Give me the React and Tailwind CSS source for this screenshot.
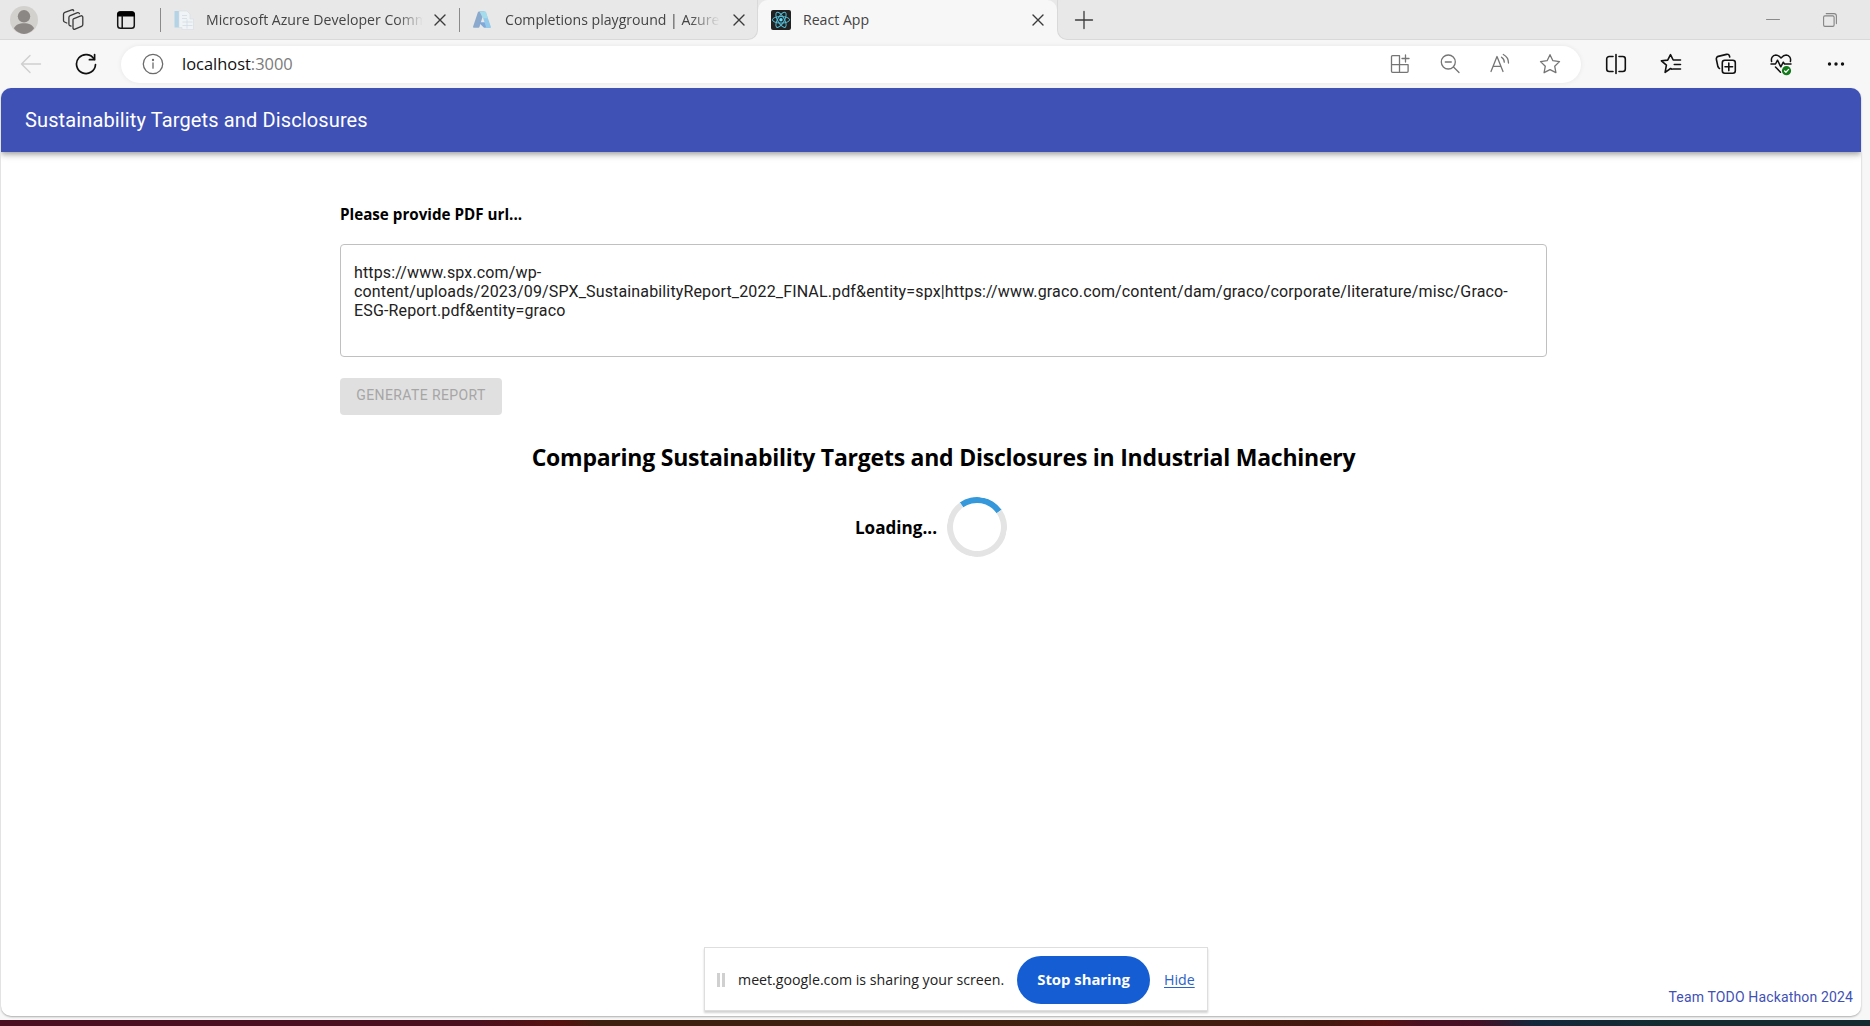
function Icon({ className, size = 24, sw = 1.3, children }) {
  return (
    <svg
      className={`shrink-0 ${className || ""}`}
      width={size}
      height={size}
      viewBox={`0 0 ${size} ${size}`}
      fill="none"
      stroke="currentColor"
      strokeWidth={sw}
      strokeLinecap="round"
      strokeLinejoin="round"
    >
      {children}
    </svg>
  );
}

function CloseIcon({ className }) {
  return (
    <Icon size={12} className={`text-[#3b3b3b] ${className || ""}`} sw={1.4}>
      <path d="M1 1l10 10M11 1L1 11" />
    </Icon>
  );
}

function Avatar() {
  return (
    <svg width="28" height="28" viewBox="0 0 28 28" className="shrink-0">
      <circle cx="14" cy="14" r="14" fill="#d3d1cd" />
      <circle cx="14" cy="10.3" r="6.2" fill="#8b8784" />
      <path d="M4 22.5c1.2-3.4 5-5.2 10-5.2s8.8 1.8 10 5.2A14 14 0 0 1 14 28 14 14 0 0 1 4 22.5z" fill="#8b8784" />
    </svg>
  );
}

function WorkspacesIcon() {
  return (
    <Icon className="text-[#3a3a3a]" sw={1.3}>
      <path d="M12.4 10.8l7.4-2.900a1.400 1.400 0 0 1 2 1.300v7.300a2 2 0 0 1-1.300 1.900l-6.500 2.800a1.400 1.400 0 0 1-2-1.300v-7.300a2 2 0 0 1 .4-1.800z" />
      <path d="M10 18.200l-1.200-.5a1.800 1.800 0 0 1-.9-1.700V9.500a2 2 0 0 1 1.300-1.900l7.300-2.900a1.500 1.500 0 0 1 1.900 1" />
      <path d="M5.800 15l-2.300-1a1.700 1.700 0 0 1-1-1.600V6.300a2 2 0 0 1 1.300-1.900l7-2.500a1.500 1.500 0 0 1 1.900.9" />
    </Icon>
  );
}

function TabActionsIcon() {
  return (
    <Icon size={20} className="text-[#151515]" sw={1.5}>
      <rect x="1.700" y="2" width="16.600" height="16.200" rx="2.800" />
      <path d="M1.200 6.500V4.200a3 3 0 0 1 3-3h11.600a3 3 0 0 1 3 3v2.300z" fill="#000" stroke="none" />
      <path d="M6.200 6v12" />
    </Icon>
  );
}

function DocFavicon() {
  return (
    <svg width="20" height="20" viewBox="0 0 20 20" className="shrink-0">
      <rect x="0.500" y="1" width="4.500" height="16.500" fill="#b4d3e6" />
      <path d="M5 1h8l3 3v5h3.500v10.500H8v-2H5z" fill="#f1f4f6" stroke="#d5dce0" strokeWidth="0.600" />
      <path d="M8 5.500h5M8 8.500h5M8.500 12h10M8.500 15.500h10M13 9.500v9" stroke="#d5dfe6" strokeWidth="0.900" />
    </svg>
  );
}

function AzureIcon() {
  return (
    <svg width="18" height="18" viewBox="0 0 18 18" className="shrink-0">
      <path d="M6 .5h5.200L6.500 15.800a1.200 1.200 0 0 1-1.100.9H1.200a1 1 0 0 1-1-1.400L4.900 1.300A1.200 1.200 0 0 1 6 .500z" fill="#8ba9cd" />
      <path d="M5.500 11.200h7.800l1 5.500H11z" fill="#7fa8d8" />
      <path d="M6.500.500h5.300a1.200 1.200 0 0 1 1.100.8l4.900 14.300a1 1 0 0 1-1 1.400h-4.600a1.200 1.200 0 0 0 .7-1.400L8.500 2z" fill="#93c9ea" />
      <path d="M6.500.500h5.300a1.200 1.200 0 0 1 1.100.8l2 6H10z" fill="#a5dcec" />
    </svg>
  );
}

function ReactFavicon() {
  return (
    <svg width="20" height="20" viewBox="0 0 20 20" className="shrink-0">
      <rect width="20" height="20" rx="2" fill="#222" />
      <g fill="none" stroke="#53bcd6" strokeWidth="1">
        <ellipse cx="10" cy="9.800" rx="8.600" ry="3.300" />
        <ellipse cx="10" cy="9.800" rx="8.600" ry="3.300" transform="rotate(60 10 9.800)" />
        <ellipse cx="10" cy="9.800" rx="8.600" ry="3.300" transform="rotate(120 10 9.800)" />
      </g>
      <circle cx="10" cy="9.800" r="1.700" fill="#61dafb" />
    </svg>
  );
}

function TabBar() {
  return (
    <div className="flex h-10 shrink-0 bg-[#f7f7f7] text-[14.100px] leading-5 text-[#444]">
      <div className="flex w-[758px] items-center rounded-br-[10px] border-r border-b border-[#d9d9d9] bg-[#e8e8e8]">
        <div className="ml-[10px] flex items-center">
          <Avatar />
          <span className="ml-[23px] flex"><WorkspacesIcon /></span>
          <span className="ml-[31px] flex"><TabActionsIcon /></span>
        </div>
        <div className="ml-6 h-6 w-px bg-[#8a8a8a]" />
        <div className="ml-[13px] flex w-[274px] items-center">
          <DocFavicon />
          <span className="ml-3 w-[217px] overflow-hidden whitespace-nowrap [mask-image:linear-gradient(to_right,#000_88%,transparent)]">
            Microsoft Azure Developer Comm
          </span>
          <CloseIcon className="ml-[11px]" />
        </div>
        <div className="ml-[11px] h-6 w-px bg-[#8a8a8a]" />
        <div className="ml-[13px] flex items-center">
          <AzureIcon />
          <span className="ml-[14px] w-[215px] overflow-hidden whitespace-nowrap [mask-image:linear-gradient(to_right,#000_86%,transparent)]">
            Completions playground | Azure
          </span>
          <CloseIcon className="ml-[13px]" />
        </div>
      </div>
      <div className="w-[299px] bg-[#e8e8e8]">
        <div className="flex h-full items-center rounded-t-[10px] bg-[#f7f7f7] pl-[13px]">
          <ReactFavicon />
          <span className="ml-3 w-[229px]">React App</span>
          <CloseIcon />
        </div>
      </div>
      <div className="flex flex-1 items-center rounded-bl-[10px] border-b border-l border-[#d9d9d9] bg-[#e8e8e8] text-[#3b3b3b]">
        <Icon size={20} className="ml-4 text-[#3b3b3b]" sw={1.3}>
          <path d="M10 1.500v17M1.500 10h17" />
        </Icon>
        <Icon size={14} className="ml-auto text-[#8a8a8a]" sw={1}>
          <path d="M.5 6.500h13" />
        </Icon>
        <Icon size={14} className="mr-[33px] ml-[43px] text-[#858585]" sw={1.100}>
          <rect x="0.600" y="2.900" width="10.500" height="10.500" rx="1.300" />
          <path d="M3.200.6h7.800a2.400 2.400 0 0 1 2.400 2.400v7.600" />
        </Icon>
      </div>
    </div>
  );
}

function Toolbar() {
  return (
    <div className="flex h-12 shrink-0 items-center bg-[#f7f7f7]">
      <Icon size={22} className="ml-5 text-[#cfcfcf]" sw={1.4}>
        <path d="M20.500 11H1.500M10 2.500L1.500 11l8.500 8.500" />
      </Icon>
      <Icon size={22} className="ml-[33px] text-[#111]" sw={1.7}>
        <path d="M19.300 6.400A9.500 9.500 0 1 0 20.500 11.500" />
        <path d="M19.600 1.500v5.200h-5.200" />
      </Icon>
      <div className="ml-6 flex h-[37px] w-[1460px] items-center rounded-full bg-white pl-[21px] shadow-[0_0_5px_rgba(0,0,0,0.07)]">
        <Icon size={22} className="text-[#6b6b6b]" sw={1.3}>
          <circle cx="11" cy="11" r="9.700" />
          <path d="M11 10v5.200" />
          <circle cx="11" cy="7" r="0.500" fill="currentColor" />
        </Icon>
        <span className="ml-[18px] text-[16.450px] leading-6 text-[#111]">
          localhost<span className="text-[#7b7b7b]">:3000</span>
        </span>
        <div className="mr-[20px] ml-auto flex items-center gap-7 text-[#757575]">
          <Icon size={22} sw={1.3}>
            <path d="M10.500 2.700H3.500a1 1 0 0 0-1 1v14.600a1 1 0 0 0 1 1h14.600a1 1 0 0 0 1-1v-6.600H2.500M10.500 2.700v16.600M16.500 2v7M13 5.500h7" />
          </Icon>
          <Icon size={22} sw={1.3}>
            <circle cx="9.300" cy="9" r="7" />
            <path d="M6.300 9h6M14.500 14l5.500 5.500" />
          </Icon>
          <Icon size={22} sw={1.3}>
            <path d="M2 18.500L8 3.500l6 15M4.200 13.300h7.600M12.500 4.200a6 6 0 0 1 2.800 5M14.300 1.500a9.500 9.500 0 0 1 5.200 8.500" />
          </Icon>
          <Icon size={22} sw={1.3}>
            <path d="M11 1.700l2.900 6 6.600.9-4.800 4.600 1.200 6.500L11 16.600l-5.900 3.100 1.200-6.500L1.500 8.600l6.600-.9z" />
          </Icon>
        </div>
      </div>
      <div className="ml-[23px] flex items-center gap-[31px] text-[#111]">
        <Icon sw={1.6}>
          <path d="M9 4.500H5.200a2.500 2.500 0 0 0-2.500 2.500v10a2.500 2.500 0 0 0 2.500 2.500H9M15 4.500h3.800a2.500 2.500 0 0 1 2.500 2.500v10a2.500 2.500 0 0 1-2.500 2.500H15M12 2.500v19" />
        </Icon>
        <Icon sw={1.600}>
          <path d="M13 17.200l-1.400-.7-5.500 3.900 1.300-7.300-5-4.300 6.300-.7L11.500 2.600l2.700 5.400h7.300M15.300 12.500h6.200M14 17h7.500" />
        </Icon>
        <Icon sw={1.600}>
          <rect x="8.300" y="8.300" width="13" height="13" rx="2.500" />
          <path d="M14.800 11v7.600M11 14.800h7.600M5.500 16.500l-.6-.5a3 3 0 0 1-1-1.400L2.400 7.500A2.500 2.500 0 0 1 4.200 4.400l8.300-2a2.500 2.500 0 0 1 3 1.700l.2.900" />
        </Icon>
        <Icon sw={1.500}>
          <path d="M2.600 9.500C1.800 6 3.500 3.300 6.800 3.100c2.200 0 3.700 1.200 5.200 2.800 1.500-1.600 3-2.800 5.200-2.800 3.300.2 5 2.900 4.200 6.400M2 12h4.500l2-3.800 3.300 6.600 2.500-4.600 1.200 1.800H22M6.500 15l5 5.200" />
          <circle cx="17.500" cy="18.700" r="4.600" fill="#137a1b" stroke="none" />
          <path d="M15.600 19l1.300 1.200 2.700-2.800" stroke="#fff" strokeWidth="1.300" />
        </Icon>
        <Icon sw={1.600}>
          <g fill="currentColor" stroke="none">
            <circle cx="5.500" cy="12" r="1.700" />
            <circle cx="12" cy="12" r="1.700" />
            <circle cx="18.500" cy="12" r="1.700" />
          </g>
        </Icon>
      </div>
    </div>
  );
}

function SharingBar() {
  return (
    <div className="absolute top-[947px] left-[704px] flex h-[64px] w-[504px] items-center border border-[#dedede] bg-white pt-px shadow-[0_2px_2px_rgba(0,0,0,0.18)]">
      <div className="ml-3 flex gap-[2px]">
        <div className="h-[14px] w-[3px] bg-[#d0d0d0]" />
        <div className="h-[14px] w-[3px] bg-[#d0d0d0]" />
      </div>
      <span className="ml-[13px] w-[279px] text-[14.200px] leading-5 whitespace-nowrap text-[#222]">
        meet.google.com is sharing your screen.
      </span>
      <button className="h-12 w-[133px] rounded-full bg-[#145dd2] text-[14.850px] font-bold text-white">Stop sharing</button>
      <a className="ml-[14px] text-[14.200px] text-[#2a62c8] underline underline-offset-2">Hide</a>
    </div>
  );
}

const PDF_URLS =
  "https://www.spx.com/wp-content/uploads/2023/09/SPX_SustainabilityReport_2022_FINAL.pdf&entity=spx|https://www.graco.com/content/dam/graco/corporate/literature/misc/Graco-ESG-Report.pdf&entity=graco";

function Page() {
  return (
    <main className="mr-[9px] ml-px flex h-[928px] flex-col overflow-hidden rounded-[10px] bg-white shadow-[0_1px_2px_rgba(0,0,0,0.3)]">
      <header className="flex h-16 shrink-0 items-center bg-[#3f51b5] px-6 shadow-[0_2px_4px_-1px_rgba(0,0,0,0.2),0_4px_5px_0_rgba(0,0,0,0.14),0_1px_10px_0_rgba(0,0,0,0.12)]">
        <h1 className="font-['Roboto',sans-serif] text-xl tracking-[0.0065em] text-white">Sustainability Targets and Disclosures</h1>
      </header>
      <div className="ml-[339px] w-[1207px]">
        <p className="mt-[50px] text-[15.200px] leading-6 font-bold text-black">Please provide PDF url...</p>
        <textarea
          readOnly
          defaultValue={PDF_URLS}
          className="mt-[18px] block h-[113px] w-full resize-none overflow-hidden rounded border border-[#c0c0c0] px-[13px] py-[18px] font-['Roboto',sans-serif] text-base leading-[19px] tracking-[0.0092em] text-[#212121]"
        />
        <button className="mt-[21px] block h-[37px] w-[162px] rounded bg-[#e0e0e0] pb-[4px] font-['Roboto',sans-serif] text-sm tracking-[0.02857em] text-[#a6a6a6]">
          GENERATE REPORT
        </button>
        <h2 className="mt-[26px] text-center text-[23px] leading-8 font-bold tracking-[-0.24px] text-black">
          Comparing Sustainability Targets and Disclosures in Industrial Machinery
        </h2>
        <div className="mt-[24px] flex items-center justify-center gap-[10px] pr-[25px]">
          <span className="pt-[2px] text-[17.100px] leading-6 font-bold text-black">Loading...</span>
          <div className="size-[60px] rotate-[10deg] rounded-full border-[6px] border-[#e4e4e4] border-t-[#3498db]" />
        </div>
      </div>
      <footer className="mt-auto mr-[8px] mb-[9px] self-end font-['Roboto',sans-serif] text-sm tracking-[0.01071em] text-[#3f51b5]">
        Team TODO Hackathon 2024
      </footer>
    </main>
  );
}

export default function App() {
  return (
    <div className="relative flex h-[1026px] w-[1870px] flex-col overflow-hidden bg-[#f7f7f7] font-['Open_Sans','Noto_Sans',sans-serif]">
      <TabBar />
      <Toolbar />
      <Page />
      <div className="mt-auto h-[6px] bg-[linear-gradient(to_right,#4a1022_0%,#4a1020_25%,#55120f_30%,#3d2010_32%,#40200f_60%,#43190f_71%,#571212_74%,#4a1022_76%,#451025_79%,#14283c_82%,#122c2f_90%)]" />
      <SharingBar />
    </div>
  );
}
